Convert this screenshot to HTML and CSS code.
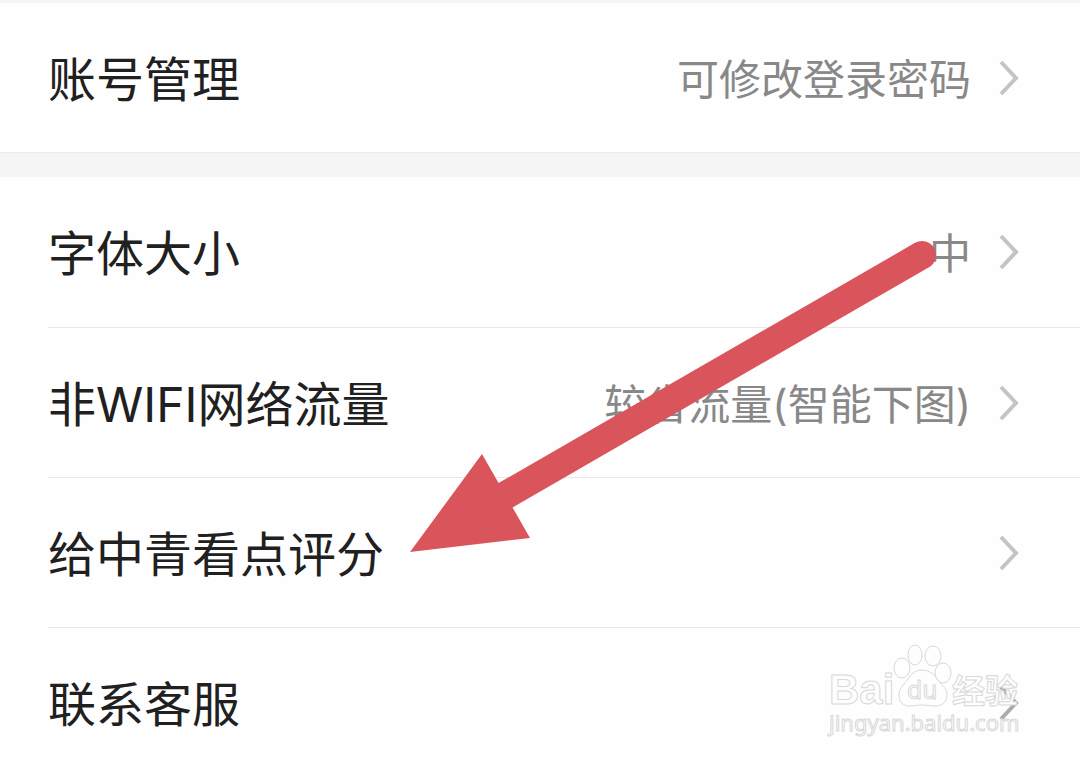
FILE: index.html
```html
<!DOCTYPE html>
<html lang="zh-CN">
<head>
<meta charset="utf-8">
<meta name="viewport" content="width=device-width, initial-scale=1">
<title>设置</title>
<link rel="stylesheet" href="styles.css">
</head>
<body>
<main class="settings">
  <ul class="group">
    <li class="item"><button class="row" type="button">
      <span class="label">账号管理</span><span class="value">可修改登录密码</span>
      <svg class="chevron" viewBox="0 0 20 36" aria-hidden="true"><path d="M2 2 17 18 2 34"/></svg>
    </button></li>
  </ul>
  <ul class="group">
    <li class="item"><button class="row" type="button">
      <span class="label">字体大小</span><span class="value">中</span>
      <svg class="chevron" viewBox="0 0 20 36" aria-hidden="true"><path d="M2 2 17 18 2 34"/></svg>
    </button></li>
    <li class="item"><button class="row" type="button">
      <span class="label">非WIFI网络流量</span><span class="value">较省流量(智能下图)</span>
      <svg class="chevron" viewBox="0 0 20 36" aria-hidden="true"><path d="M2 2 17 18 2 34"/></svg>
    </button></li>
    <li class="item"><button class="row" type="button">
      <span class="label">给中青看点评分</span>
      <svg class="chevron" viewBox="0 0 20 36" aria-hidden="true"><path d="M2 2 17 18 2 34"/></svg>
    </button></li>
    <li class="item"><button class="row" type="button">
      <span class="label">联系客服</span>
      <svg class="chevron chevron-dark" viewBox="0 0 20 36" aria-hidden="true"><path d="M2 2 17 18 2 34"/></svg>
    </button></li>
  </ul>

  <svg class="arrow" viewBox="0 0 530 316" aria-hidden="true">
    <path class="arrow-shaft" d="M96 257 512 17"/>
    <path class="arrow-head" d="M0 314 72 216 120 300Z"/>
  </svg>

  <svg class="watermark" viewBox="0 0 200 100" role="img" aria-label="Baidu 经验">
    <text class="mark mark-bai" x="5" y="64">Bai</text>
    <g class="mark">
      <ellipse cx="78" cy="28" rx="8" ry="10"/>
      <ellipse cx="91" cy="15" rx="7" ry="10"/>
      <ellipse cx="109" cy="16" rx="8" ry="10"/>
      <ellipse cx="119" cy="33" rx="8" ry="10"/>
      <path d="M98 30C91 30 87 34 84 39C81 44 75 47 75 55C75 62 79 66 86 66C91 66 94 65 98 65C103 65 106 66 111 66C118 66 123 62 123 55C123 47 116 44 113 39C110 34 105 30 98 30Z"/>
    </g>
    <text class="mark mark-du" x="83" y="59">du</text>
    <text class="mark mark-cn" x="128" y="63">经验</text>
    <text class="mark mark-url" x="5" y="91">jingyan.baidu.com</text>
  </svg>
</main>
</body>
</html>
```
FILE: styles.css
```css
* { box-sizing: border-box; }

body {
  margin: 0;
  background: #fefefe;
  font-family: Inter, "Noto Sans CJK SC", sans-serif;
}

.settings {
  position: relative;
  min-height: 100vh;
  overflow: hidden;
  border-top: 3px solid #f5f5f5;
}

.group {
  margin: 0;
  padding: 0;
  list-style: none;
}

.group:first-child { border-bottom: 1px solid #ebebeb; }

.group + .group { border-top: 24px solid #f5f5f5; }

.item + .item::before {
  content: "";
  display: block;
  height: 1px;
  margin-left: 48px;
  background: #e8e8e8;
}

.row {
  display: flex;
  align-items: center;
  gap: 28px;
  width: 100%;
  height: 149px;
  padding: 0 61px 0 48px;
  border: 0;
  background: transparent;
  font-family: inherit;
  text-align: left;
}

.group + .group .item:first-child .row { height: 150px; }

.label,
.value {
  padding-top: 4px;
  white-space: nowrap;
}

.label {
  flex: 1;
  color: #202020;
  font-size: 48px;
  line-height: 72px;
}

.value {
  color: #888;
  font-size: 42px;
  line-height: 64px;
}

.chevron {
  flex: none;
  width: 20px;
  height: 36px;
  fill: none;
  stroke: #c4c4c4;
  stroke-width: 4;
}

.chevron-dark { stroke: #aaa; }

.arrow {
  position: absolute;
  top: 235px;
  left: 410px;
  width: 530px;
  height: 316px;
  pointer-events: none;
}

.arrow-shaft {
  fill: none;
  stroke: #da555b;
  stroke-width: 28;
  stroke-linecap: round;
}

.arrow-head { fill: #da555b; }

.watermark {
  position: absolute;
  top: 637px;
  right: 56px;
  width: 200px;
  height: 100px;
  pointer-events: none;
}

.mark {
  fill: #fefefe;
  stroke: #d8d8d8;
  stroke-width: 1;
}

.mark-bai { font: bold 42px "Liberation Sans", sans-serif; }
.mark-du { font: 24px "DejaVu Sans", sans-serif; }
.mark-cn { font: bold 33px "Noto Sans CJK SC", sans-serif; }
.mark-url { font: 22px "Noto Sans", sans-serif; }
```
